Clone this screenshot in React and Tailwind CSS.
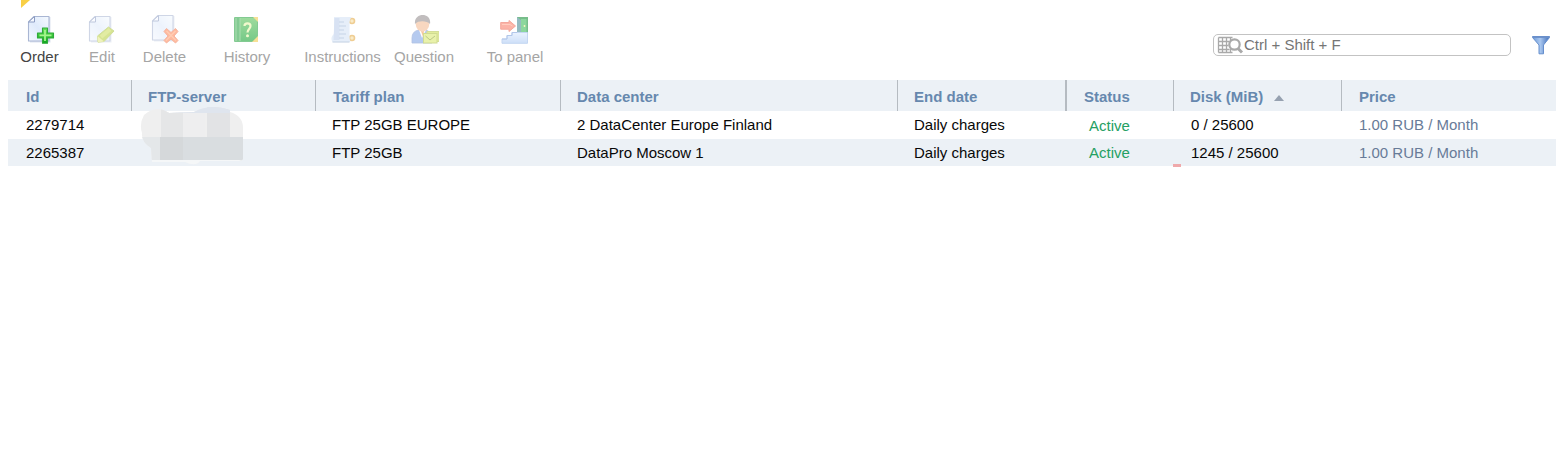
import React from "react";

function Page() {
  return (
    <>
      <path d="M8 3H23.500v25.500H3V8z" fill="#9fb0d2" opacity="0.35" />
      <path d="M7 2.500H22v24.500H1.500V8z" fill="url(#page)" stroke="#a9b6d3" strokeWidth="1.1" strokeLinejoin="round" />
      <path d="M7.500 2.500V8H1.500z" fill="#f6f9ff" stroke="#8c9cc2" strokeWidth="1" strokeLinejoin="round" />
    </>
  );
}

function Icon({ children, faded = true }) {
  return (
    <svg width="28" height="30" viewBox="0 0 28 30" className={faded ? "opacity-55" : ""}>
      {children}
    </svg>
  );
}

function Defs() {
  return (
    <defs>
      <linearGradient id="page" x1="1" y1="0" x2="0" y2="1">
        <stop offset="0" stopColor="#f5faff" />
        <stop offset="0.5" stopColor="#dfeafb" />
        <stop offset="1" stopColor="#f4f8ff" />
      </linearGradient>
      <linearGradient id="plus" x1="0" y1="0" x2="0" y2="1">
        <stop offset="0" stopColor="#69e45a" />
        <stop offset="1" stopColor="#0ca51c" />
      </linearGradient>
      <linearGradient id="funnel" x1="0" y1="0" x2="1" y2="0">
        <stop offset="0" stopColor="#6c98d8" />
        <stop offset="0.45" stopColor="#aac8f0" />
        <stop offset="1" stopColor="#3e6db9" />
      </linearGradient>
      <linearGradient id="stairs" x1="0" y1="0" x2="0" y2="1">
        <stop offset="0" stopColor="#dfecff" />
        <stop offset="1" stopColor="#b4cff5" />
      </linearGradient>
      <linearGradient id="book" x1="0" y1="0" x2="0" y2="1">
        <stop offset="0" stopColor="#74cc74" />
        <stop offset="1" stopColor="#3db356" />
      </linearGradient>
    </defs>
  );
}

const icons = {
  order: (
    <Icon faded={false}>
      <Defs />
      <Page />
      <path d="M15.5 14h5v5h6v5h-6v5.3h-5V24h-5v-5h5z" fill="url(#plus)" stroke="#2fa93a" strokeWidth="1.1" strokeLinejoin="round" />
      <path d="M18 16v11M12.5 21.4h12" stroke="#a5f58d" strokeWidth="1.8" />
    </Icon>
  ),
  edit: (
    <Icon>
      <Page />
      <path d="M9.500 22L20.500 13l5.500 4L16 27.500l-6 .700z" fill="#b5cf3a" stroke="#abc34c" strokeLinejoin="round" />
      <path d="M13 23L22 15.500" stroke="#cbdd58" strokeWidth="4" />
      <path d="M9.500 22l6.500 5.500-6 .700z" fill="#e5e886" />
    </Icon>
  ),
  remove: (
    <Icon>
      <g transform="translate(0 -1)"><Page /></g>
      <path d="M13 17.5l2.5-3 4.500 4 4.500-4 2.500 3-4 4.500 4 4.500-2.500 2.500-4.500-4-4.500 4-2.500-2.500 4-4.500z" fill="#ff8250" stroke="#f07952" strokeLinejoin="round" />
      <path d="M15.500 17l9.500 9.500M24.500 17L15 26.500" stroke="#ffa678" strokeWidth="1.3" />
    </Icon>
  ),
  history: (
    <svg width="28" height="30" viewBox="0 0 28 30" className="opacity-70">
      <rect x="2" y="3" width="24" height="25" rx="1" fill="#4fb564" />
      <rect x="8" y="4" width="17" height="23" fill="url(#book)" />
      <path d="M4 4v23M8 4v23" stroke="#8ad191" />
      <path d="M21 3h5v5zM26 22v6h-6z" fill="#f5d36b" />
      <path d="M12.500 12c0-3.500 6-3.500 6 0 0 3-3 3-3 6.500" fill="none" stroke="#edf7b9" strokeWidth="2.2" />
      <circle cx="15.5" cy="21.8" r="1.5" fill="#edf7b9" />
    </svg>
  ),
  instructions: (
    <svg width="28" height="30" viewBox="0 0 28 30" className="opacity-70">
      <circle cx="22" cy="7" r="2.5" fill="#f7e3b2" stroke="#e9b965" strokeWidth="1.6" />
      <circle cx="22" cy="24" r="2.5" fill="#f7e3b2" stroke="#e9b965" strokeWidth="1.6" />
      <path d="M4 3h17.500c-2 3-2 5-2 8v9c0 3 0 5 1 8H2.500c-2-3-1-6 1.500-8z" fill="#dce8f7" />
      <path d="M4.500 4h5v22H3.500z" fill="#c8d7ee" />
      <path d="M9 8h5M9 12h7M9 16h5M9 20h7M9 24h5" stroke="#b0c2de" strokeWidth="1" />
      <path d="M2.500 28h17" stroke="#b5c5de" strokeWidth="1.2" />
    </svg>
  ),
  question: (
    <svg width="28" height="30" viewBox="0 0 28 30" className="opacity-60">
      <path d="M1 29v-5q0-7 7-8h6q6 1 7 7v6z" fill="#85a7e5" stroke="#7f9bd2" strokeWidth="0.8" />
      <path d="M8 16l3 8 4-8z" fill="#fff" />
      <path d="M10 17h3l-1 6z" fill="#f1a15b" />
      <ellipse cx="11.5" cy="10.5" rx="6.7" ry="7.2" fill="#f5be97" />
      <path d="M4 10c-1.500-12 17-12 15 0-3-3-11-4-15 0z" fill="#989293" />
      <rect x="16" y="17.5" width="12" height="10" fill="#cfe05c" stroke="#b9c955" />
      <rect x="12.5" y="19.5" width="13.5" height="9.500" fill="#dcea74" stroke="#b2c44a" />
      <path d="M14.500 22l4.500 4 5-4" fill="none" stroke="#8da337" />
    </svg>
  ),
  panel: (
    <svg width="28" height="30" viewBox="0 0 28 30" className="opacity-65">
      <rect x="17" y="3" width="11" height="16" fill="#2f9b4c" />
      <path d="M17 3l4 3v12l-4 1z" fill="#5b97a0" />
      <path d="M21 5h5.500v13H21z" fill="#4fc36b" />
      <circle cx="24.5" cy="12" r="0.9" fill="#f8f0a0" />
      <path d="M0.7 8.500H9V6.500l6.500 5.500L9 17.500v-2.300H.7z" fill="#fa8c79" stroke="#ee7b68" strokeLinejoin="round" />
      <path d="M2 10.500h8l2.500 1.500" fill="none" stroke="#ffb49e" />
      <path d="M2 29.300V25h5v-3.500h5V18.500h15.500v10.800z" fill="url(#stairs)" stroke="#a5c1ec" />
      <path d="M2 25h5v-3.500h5V18.500h5" fill="none" stroke="#8aaae0" />
    </svg>
  ),
};

const tools = [
  { label: "Order", icon: "order", box: "w-[63px]", shift: "pl-0.5", color: "text-[#444]" },
  { label: "Edit", icon: "edit", box: "w-[62px]", shift: "" },
  { label: "Delete", icon: "remove", box: "w-[63px]", shift: "" },
  { label: "History", icon: "history", box: "ml-[9px] w-[84px]", shift: "pr-0.5" },
  { label: "Instructions", icon: "instructions", box: "ml-[12px] w-[83px]", shift: "pl-0.5" },
  { label: "Question", icon: "question", box: "w-[80px]", shift: "pl-0.5" },
  { label: "To panel", icon: "panel", box: "ml-[16px] w-[70px]", shift: "pr-0.5" },
];

const grid = "grid grid-cols-[123px_184px_245px_337px_169px_107px_168px_215px]";

const headings = [
  { label: "Id", cell: "pl-[18px]" },
  { label: "FTP-server", cell: "border-l pl-[16px]" },
  { label: "Tariff plan", cell: "border-l pl-[17px]" },
  { label: "Data center", cell: "border-l pl-[16px]" },
  { label: "End date", cell: "border-l pl-[16px]" },
  { label: "Status", cell: "-ml-px border-l-2 pl-[17px]" },
  { label: "Disk (MiB)", cell: "border-l pl-[16px]", sorted: true },
  { label: "Price", cell: "border-l pl-[17px]" },
];

const rows = [
  { id: "2279714", plan: "FTP 25GB EUROPE", center: "2 DataCenter Europe Finland", disk: "0 / 25600" },
  { id: "2265387", plan: "FTP 25GB", center: "DataPro Moscow 1", disk: "1245 / 25600", used: true },
];

function Row({ row, striped }) {
  return (
    <div className={`${grid} ${striped ? "h-[27px] bg-[#ecf1f6]" : "h-[28px] bg-white"} leading-[28px] text-[#080808]`}>
      <div className="pl-[18px]">{row.id}</div>
      <div />
      <div className="pl-[17px]">{row.plan}</div>
      <div className="pl-[17px]">{row.center}</div>
      <div className="pl-[17px]">Daily charges</div>
      <div className={`pl-[23px] text-[#25a063] ${striped ? "" : "pt-px"}`}>Active</div>
      <div className="relative pl-[18px]">
        {row.disk}
        {row.used && <span className="absolute bottom-0 left-0 h-[3px] w-2 bg-[#efa9ab]" />}
      </div>
      <div className="pl-[18px] text-[#687b98]">1.00 RUB / Month</div>
    </div>
  );
}

function Redaction() {
  return (
    <svg width="106" height="62" viewBox="0 0 106 62" className="absolute left-[132px] top-[26px]">
      <clipPath id="blob">
        <path d="M4 9Q16-2 29 7l25-1Q70-3 90 4v2q14 4 13 18v29q-1 2-6 2H60q-4 6-15 1H12l-1-14Q1 36 2 27q-3-9 2-18z" />
      </clipPath>
      <g clipPath="url(#blob)">
        <rect width="106" height="62" fill="#efefef" />
        <rect x="21" y="0" width="22" height="31" fill="#e5e6e7" />
        <rect x="43" y="4" width="22" height="27" fill="#eeeeef" />
        <rect x="67" y="0" width="23" height="31" fill="#e2e3e5" />
        <path d="M28 5h27Q72-5 90 2v5H28z" fill="#dfe5ee" />
        <rect y="31" width="21" height="31" fill="#e4e7e9" />
        <rect x="20" y="31" width="23" height="24" fill="#d5d8da" />
        <rect x="43" y="31" width="63" height="24" fill="#d9dde0" />
        <rect y="54" width="106" height="8" fill="#f5f7f8" />
      </g>
    </svg>
  );
}

export default function App() {
  return (
    <div className="relative h-[464px] w-[1560px] overflow-hidden bg-white px-2 font-['Liberation_Sans',Arial,sans-serif] text-[15px]">
      <svg width="9" height="9" viewBox="0 0 9 9" className="absolute left-[21px] top-0">
        <path d="M0 0h9L0 8z" fill="#f8cf46" />
      </svg>
      <header className="flex h-20 justify-between pt-[14px]">
        <nav className="flex">
          {tools.map((tool) => (
            <button key={tool.label} className={`flex shrink-0 flex-col items-center ${tool.box} ${tool.color || "text-[#a5a5a5]"}`}>
              <span className={`block ${tool.shift}`}>{icons[tool.icon]}</span>
              <span className="mt-[3px] whitespace-nowrap leading-5">{tool.label}</span>
            </button>
          ))}
        </nav>
        <div className="flex items-start pr-[2px] pt-5">
          <div className="flex h-[22px] w-[298px] items-center rounded-[5px] border border-[#c3c3c3] pl-[3px] text-[#757575]">
            <svg width="27" height="18" viewBox="0 0 27 18" fill="none" stroke="#a9a9a9">
              <path d="M1.5 1.5h14M1.5 5.5h11M1.5 9.5h10M1.5 13.5h11M1.5 16.5h14M1.5 1.5v15M5.5 1.5v15M9.5 1.5v15M13.5 1.5v3M13.5 13v3.5" strokeWidth="1.3" />
              <circle cx="17.5" cy="8.500" r="5.2" strokeWidth="2.2" fill="#fff" />
              <path d="M21 12.500l4 4" strokeWidth="3" />
            </svg>
            <span>Ctrl + Shift + F</span>
          </div>
          <svg width="18" height="19" viewBox="0 0 18 19" className="ml-[21px] mt-[2px]">
            <path d="M.5.5h17v1l-6 7.500v8.800H7V9L.5 1.500z" fill="url(#funnel)" stroke="#668fcd" />
            <path d="M1 1.200h16" stroke="#6c91ca" strokeWidth="1.5" />
          </svg>
        </div>
      </header>
      <main className="relative w-[1548px]">
        <div className={`${grid} h-[31px] bg-[#ecf1f6] font-bold leading-[31px] text-[#6688ae]`}>
          {headings.map((heading) => (
            <div key={heading.label} className={`flex h-[31px] items-center border-[#b5bbc1] pt-px ${heading.cell}`}>
              <span className="pt-px">{heading.label}</span>
              {heading.sorted && (
                <svg width="10" height="6" viewBox="0 0 10 6" className="ml-[11px] mt-[4px]">
                  <path d="M5 0l5 6H0z" fill="#96a1b0" />
                </svg>
              )}
            </div>
          ))}
        </div>
        {rows.map((row, index) => (
          <Row key={row.id} row={row} striped={index % 2 === 1} />
        ))}
        <Redaction />
      </main>
    </div>
  );
}
